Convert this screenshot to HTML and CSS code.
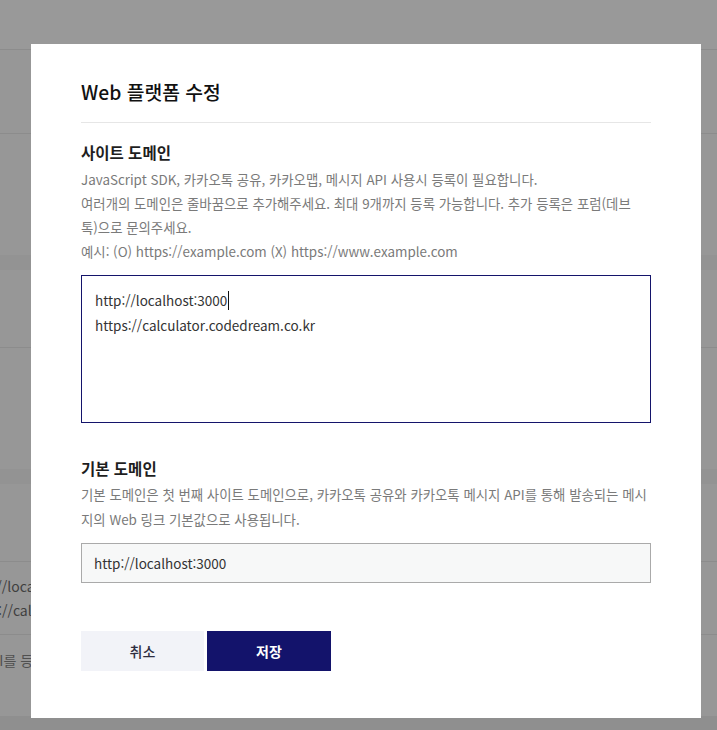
FILE: index.html
```html
<!DOCTYPE html>
<html lang="ko">
<head>
<meta charset="utf-8">
<title>Web 플랫폼 수정</title>
<link rel="stylesheet" href="styles.css">
</head>
<body>
<div class="page">
  <div class="pg-top"></div>
  <div class="pg-sec pg-sec1"></div>
  <div class="pg-gap1"></div>
  <div class="pg-band"></div>
  <div class="pg-sec pg-sec2"></div>
  <div class="pg-gap2"></div>
  <div class="pg-band"></div>
  <div class="pg-sec pg-sec3"></div>
  <div class="pg-sec pg-list">
    <div class="pg-text">http://localhost:3000</div>
    <div class="pg-text pg-text2">https://calculator.codedream.co.kr</div>
  </div>
  <div class="pg-foot">
    <div class="pg-text pg-text3">API를 등록</div>
  </div>
  <div class="pg-bottom"></div>
</div>

<div class="modal">
  <h2 class="modal-title">Web 플랫폼 수정</h2>

  <section class="field field-site">
    <h3 class="field-label">사이트 도메인</h3>
    <p class="field-desc">JavaScript SDK, 카카오톡 공유, 카카오맵, 메시지 API 사용시 등록이 필요합니다.<br>여러개의 도메인은 줄바꿈으로 추가해주세요. 최대 9개까지 등록 가능합니다. 추가 등록은 포럼(데브톡)으로 문의주세요.<br>예시: (O) https://example.com (X) https://www.example.com</p>
    <div class="textarea">
      <div class="ta-line">http://localhost:3000<span class="caret"></span></div>
      <div class="ta-line">https://calculator.codedream.co.kr</div>
    </div>
  </section>

  <section class="field field-base">
    <h3 class="field-label">기본 도메인</h3>
    <p class="field-desc">기본 도메인은 첫 번째 사이트 도메인으로, 카카오톡 공유와 카카오톡 메시지 API를 통해 발송되는 메시지의 Web 링크 기본값으로 사용됩니다.</p>
    <div class="select">http://localhost:3000</div>
  </section>

  <div class="actions">
    <button class="btn btn-cancel" type="button">취소</button>
    <button class="btn btn-save" type="button">저장</button>
  </div>
</div>
</body>
</html>
```

FILE: styles.css
```css
html, body {
  margin: 0;
  padding: 0;
}
body {
  width: 717px;
  height: 730px;
  overflow: hidden;
  position: relative;
  background: #979797;
  font-family: "Noto Sans CJK KR", "Noto Sans", sans-serif;
}

/* dimmed page behind the modal */
.page {
  display: flex;
  flex-direction: column;
  height: 730px;
}
.pg-top {
  height: 49px;
  flex: none;
  background: #999999;
  border-bottom: 1px solid #8c8c8c;
}
.pg-sec {
  flex: none;
  border-bottom: 1px solid #8c8c8c;
}
.pg-sec1 { height: 83px; }
.pg-gap1 { height: 121px; flex: none; }
.pg-band { height: 15px; flex: none; background: #939393; }
.pg-sec2 { height: 77px; }
.pg-gap2 { height: 121px; flex: none; }
.pg-sec3 { height: 77px; }
.pg-list {
  height: 72px;
  display: flex;
  flex-direction: column;
  justify-content: center;
  gap: 2px;
}
.pg-text {
  font-size: 14px;
  line-height: 22px;
  color: #3f3f3f;
  white-space: nowrap;
  margin-left: -35px;
}
.pg-text2 { margin-left: -36px; }
.pg-foot {
  height: 81px;
  flex: none;
  padding-top: 14px;
  box-sizing: border-box;
}
.pg-text3 { margin-left: -18px; color: #505050; }
.pg-bottom {
  flex: 1;
  background: #8f8f8f;
}

/* modal */
.modal {
  position: absolute;
  left: 31px;
  top: 44px;
  width: 670px;
  height: 674px;
  box-sizing: border-box;
  padding: 33px 50px 47px;
  background: #ffffff;
  display: flex;
  flex-direction: column;
}
.modal-title {
  margin: 0;
  padding-bottom: 15px;
  border-bottom: 1px solid #e6e6e6;
  font-size: 19.3px;
  line-height: 30px;
  font-weight: 500;
  color: #111111;
}
.field-site { margin-top: 17px; }
.field-base { margin-top: 33px; }
.field-label {
  margin: 0;
  font-size: 15.5px;
  line-height: 24px;
  font-weight: 700;
  color: #1e1e1e;
}
.field-desc {
  margin: 3px 0 0;
  font-size: 13.4px;
  line-height: 24px;
  color: #7a7a7a;
}
.field-site .field-desc { padding-right: 7px; }
.field-base .field-desc { line-height: 25px; margin-top: 2px; }
.textarea {
  margin-top: 12px;
  height: 148px;
  box-sizing: border-box;
  border: 1px solid #14146b;
  padding: 12px 13px;
  font-size: 13.5px;
  line-height: 25px;
  color: #333333;
}
.caret {
  display: inline-block;
  width: 1px;
  height: 19px;
  background: #111111;
  vertical-align: -4px;
  margin-left: 1px;
}
.select {
  margin-top: 11px;
  height: 40px;
  box-sizing: border-box;
  border: 1px solid #aaaaaa;
  background: #f7f8f8;
  padding: 0 12px;
  font-size: 13.5px;
  line-height: 38px;
  color: #333333;
}
.actions {
  margin-top: auto;
  display: flex;
  gap: 3px;
}
.btn {
  width: 124px;
  height: 40px;
  border: 0;
  padding: 0;
  font-family: inherit;
  font-size: 14px;
  font-weight: 700;
  cursor: pointer;
}
.btn-cancel {
  width: 123px;
  background: #f2f3f8;
  color: #2e2e40;
  font-weight: 500;
}
.btn-save {
  background: #13136b;
  color: #ffffff;
}
```
